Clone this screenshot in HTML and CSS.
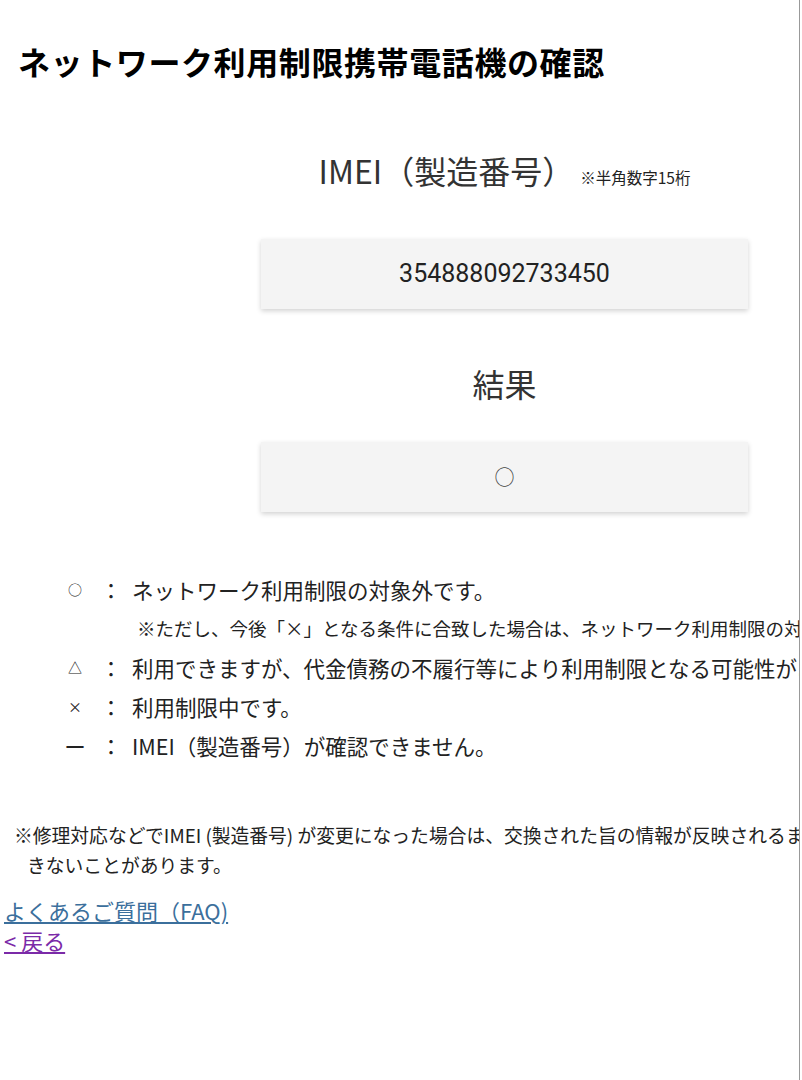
FILE: index.html
```html
<!DOCTYPE html>
<html lang="ja">
<head>
  <meta charset="UTF-8" />
  <meta name="viewport" content="width=device-width, initial-scale=1" />
  <title>ネットワーク利用制限携帯電話機の確認</title>
  <link rel="stylesheet" href="styles.css">
</head>
<body>
  <div class="page">

    <h1 class="page-title">ネットワーク利用制限携帯電話機の確認</h1>

    <!-- IMEI / result -->
    <section class="check">
      <div class="check-label check-label-imei">IMEI（製造番号）<span class="check-hint">※半角数字15桁</span></div>
      <div class="check-field check-field-imei">354888092733450</div>

      <div class="check-label">結果</div>
      <div class="check-field check-result">○</div>
    </section>

    <!-- Legend -->
    <ul class="legend">
      <li class="legend-row">
        <span class="legend-mark legend-small">○</span><span class="legend-colon">：</span><span>ネットワーク利用制限の対象外です。</span>
      </li>
      <li class="legend-sub">※ただし、今後「×」となる条件に合致した場合は、ネットワーク利用制限の対象となります。</li>
      <li class="legend-row">
        <span class="legend-mark legend-small">△</span><span class="legend-colon">：</span><span>利用できますが、代金債務の不履行等により利用制限となる可能性があります。</span>
      </li>
      <li class="legend-row">
        <span class="legend-mark legend-small">×</span><span class="legend-colon">：</span><span>利用制限中です。</span>
      </li>
      <li class="legend-row">
        <span class="legend-mark">ー</span><span class="legend-colon">：</span><span>IMEI（製造番号）が確認できません。</span>
      </li>
    </ul>

    <p class="remark">※修理対応などでIMEI (製造番号) が変更になった場合は、交換された旨の情報が反映されるまで、正しく確認で<br>きないことがあります。</p>

    <div class="links">
      <a href="#faq" class="link-faq">よくあるご質問（FAQ)</a>
      <a href="#back" class="link-back">&lt; 戻る</a>
    </div>

  </div>
</body>
</html>
```

FILE: styles.css
```css
body {
  margin: 0;
  padding: 0;
  background: #fff;
  font-family: "Noto Sans CJK JP", "Noto Sans", sans-serif;
  color: #222;
}

.page {
  width: 800px;
  min-height: 1080px;
  border-right: 1px solid #999;
  overflow: hidden;
  box-sizing: border-box;
}

.page-title {
  margin: 0;
  padding: 35px 0 0 18px;
  font-size: 32px;
  line-height: 52px;
  font-weight: bold;
  color: #000;
  letter-spacing: 0.6px;
  white-space: nowrap;
}

/* IMEI / result column */
.check {
  width: 487px;
  margin: 61px 0 0 261px;
  display: flex;
  flex-direction: column;
}

.check-label {
  text-align: center;
  font-size: 32px;
  line-height: 44px;
  color: #333;
  white-space: nowrap;
}

.check-hint {
  font-size: 15.5px;
  margin-left: 6px;
  color: #222;
}

.check-field {
  margin-top: 37px;
  height: 70px;
  line-height: 70px;
  background: #f4f4f4;
  box-shadow: 0 2px 5px rgba(0, 0, 0, 0.18);
  text-align: center;
  font-family: Roboto, "Noto Sans CJK JP", sans-serif;
  font-size: 25px;
  color: #222;
}

.check-field-imei {
  margin-top: 40px;
  margin-bottom: 52px;
}

.check-result {
  font-family: "Noto Sans CJK JP", sans-serif;
  font-size: 20px;
  color: #444;
}

/* Legend */
.legend {
  list-style: none;
  margin: 58px 0 0;
  padding: 0 0 0 60px;
  font-size: 21.5px;
  line-height: 39px;
  color: #222;
}

.legend-row {
  display: flex;
  white-space: nowrap;
}

.legend-mark {
  flex-shrink: 0;
  width: 30px;
  text-align: center;
}

.legend-small {
  font-size: 14px;
}

.legend-colon {
  flex-shrink: 0;
  width: 42px;
  text-align: center;
}

.legend-sub {
  padding-left: 77px;
  font-size: 18.5px;
  white-space: nowrap;
}

.remark {
  margin: 55px 0 0;
  padding: 0 0 0 27px;
  text-indent: -13px;
  font-size: 18.8px;
  line-height: 30px;
  white-space: nowrap;
  color: #222;
}

.links {
  display: flex;
  flex-direction: column;
  align-items: flex-start;
  padding: 15px 0 0 4px;
  font-size: 22px;
  line-height: 30px;
}

.link-faq {
  color: #3b6f9c;
}

.link-back {
  color: #7b2aa8;
}
```
